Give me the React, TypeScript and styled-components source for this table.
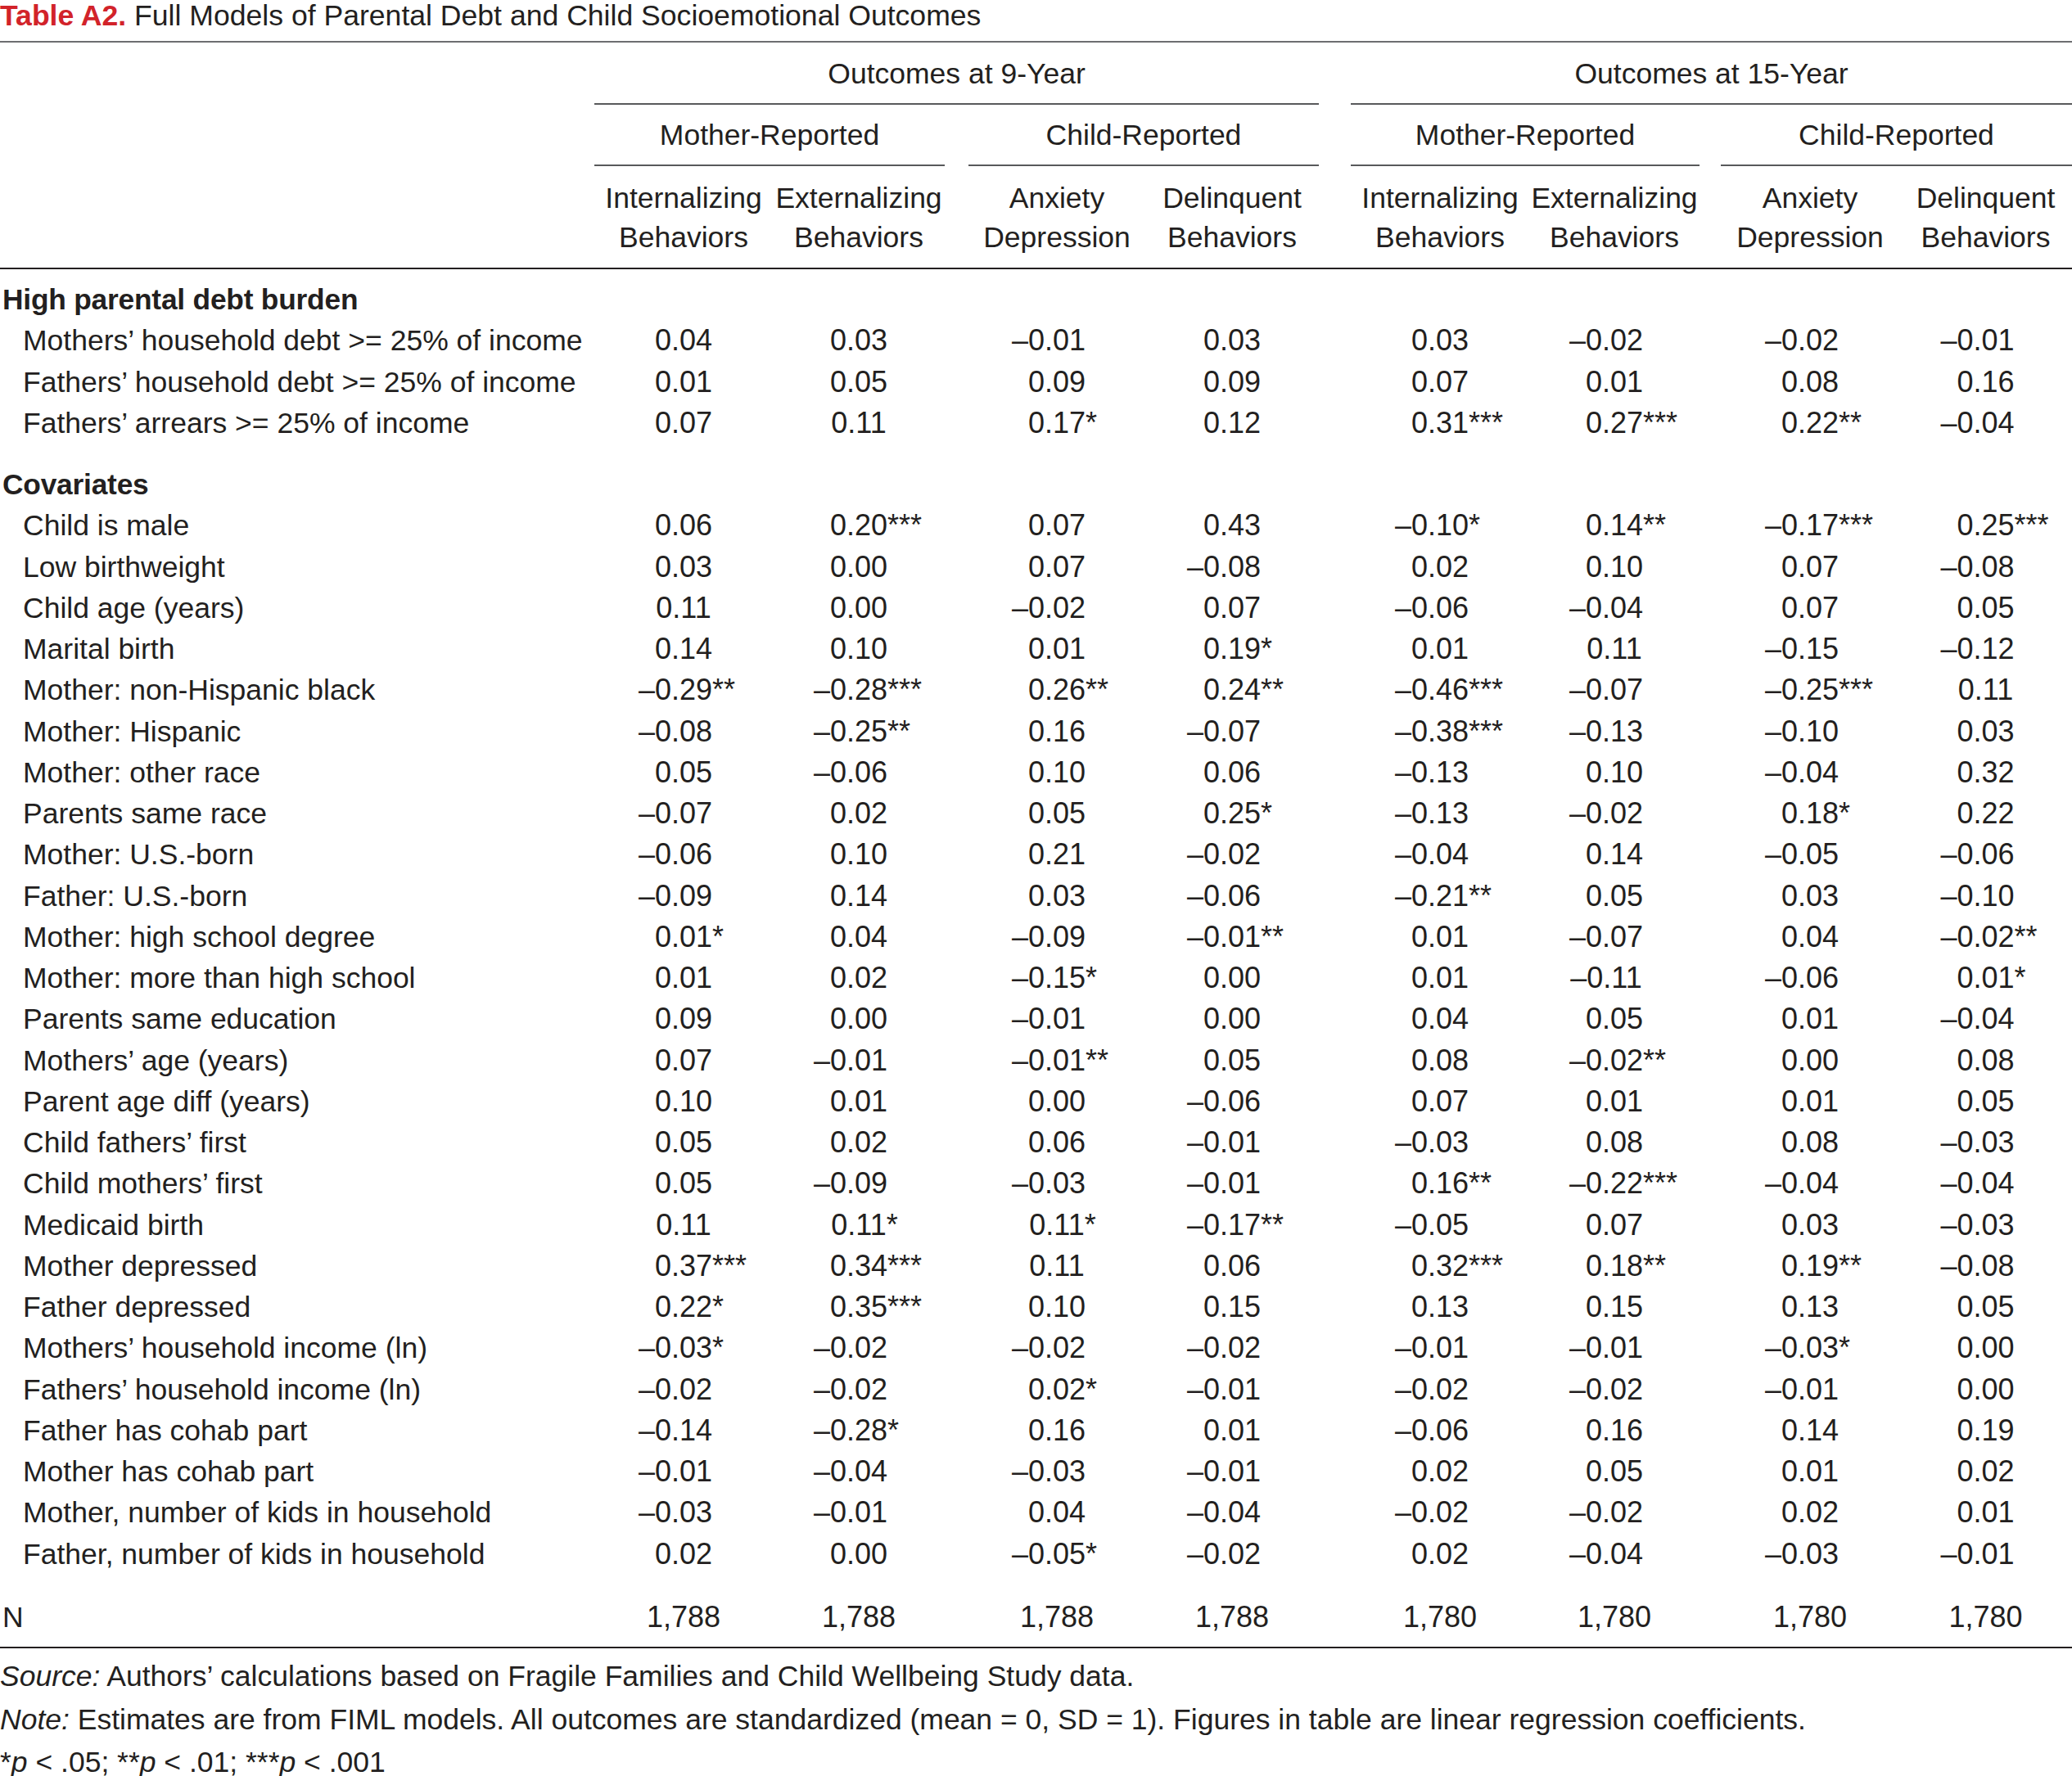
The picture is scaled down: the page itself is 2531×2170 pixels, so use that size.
import React from 'react';
import styled, { createGlobalStyle, css } from 'styled-components';

const GlobalStyle = createGlobalStyle`
    html, body {
        margin: 0;
        padding: 0;
        background: #ffffff;
    }
    body {
        font-family: "Liberation Sans", Arial, sans-serif;
        color: #231f20;
    }
`

// label column, then pairs of value columns with the gaps between groups
const columns = css`
    display: grid;
    grid-template-columns: 726px 218px 210px 29px 216px 212px 39px 218px 208px 26px 218px 211px;
`

const VALUE_COLS = [2, 3, 5, 6, 8, 9, 11, 12];

const Page = styled.div`
    width: 2531px;
    overflow: hidden;
`

const Title = styled.div`
    font-size: 35.6px;
    line-height: 38px;
    white-space: nowrap;
`

const TitleTag = styled.span`
    color: #d2232a;
    font-weight: 700;
`

const TopRule = styled.div`
    height: 2px;
    margin-top: 12px;
    background: #6d6e71;
`

const HeadRow = styled.div`
    ${columns}
    font-size: 35.5px;
`

const SpanHead = styled.div<{ $from: number; $to: number }>`
    grid-column: ${p => p.$from} / ${p => p.$to};
    text-align: center;
    line-height: 50px;
    white-space: nowrap;
    border-bottom: 2px solid #58595b;
`

const GroupHead = styled(SpanHead)`
    padding: 13px 0 11px;
`

const SubHead = styled(SpanHead)`
    padding: 12px 0 11px;
`

const ColHeadRow = styled(HeadRow)`
    border-bottom: 2px solid #231f20;
`

const ColHead = styled.div<{ $col: number }>`
    grid-column: ${p => p.$col};
    text-align: center;
    line-height: 48px;
    padding: 15px 0 13px;
    white-space: nowrap;
`

const Body = styled.div`
    padding: 12px 0 11px;
    border-bottom: 2px solid #231f20;
`

const Row = styled.div`
    ${columns}
    height: 50.25px;
    align-items: center;
    line-height: 50px;
`

const Section = styled.div`
    grid-column: 1;
    padding-left: 3px;
    font-size: 35.3px;
    font-weight: 700;
    letter-spacing: -0.2px;
    white-space: nowrap;
`

const Label = styled.div<{ $flush?: boolean }>`
    grid-column: 1;
    padding-left: ${p => (p.$flush ? 3 : 28)}px;
    font-size: 35.5px;
    white-space: nowrap;
`

const Spacer = styled.div<{ $h: number }>`
    height: ${p => p.$h}px;
`

const Value = styled.div<{ $col: number }>`
    grid-column: ${p => p.$col};
    display: grid;
    grid-template-columns: 1fr auto 1fr;
    font-size: 36px;
    white-space: nowrap;
`

const Minus = styled.span`
    justify-self: end;
`

const Stars = styled.span`
    justify-self: start;
`

const Count = styled.div<{ $col: number }>`
    grid-column: ${p => p.$col};
    text-align: center;
    font-size: 36px;
`

const Footer = styled.div`
    padding-top: 8px;
    font-size: 35.5px;
    line-height: 52.5px;
`

const Note = styled.div`
    white-space: nowrap;
`

const Em = styled.i`
    font-style: italic;
`

type Item = { label: string; values: string[] };

const debt: Item[] = [
    { label: 'Mothers’ household debt >= 25% of income', values: ['0.04', '0.03', '-0.01', '0.03', '0.03', '-0.02', '-0.02', '-0.01'] },
    { label: 'Fathers’ household debt >= 25% of income', values: ['0.01', '0.05', '0.09', '0.09', '0.07', '0.01', '0.08', '0.16'] },
    { label: 'Fathers’ arrears >= 25% of income', values: ['0.07', '0.11', '0.17*', '0.12', '0.31***', '0.27***', '0.22**', '-0.04'] },
];

const covariates: Item[] = [
    { label: 'Child is male', values: ['0.06', '0.20***', '0.07', '0.43', '-0.10*', '0.14**', '-0.17***', '0.25***'] },
    { label: 'Low birthweight', values: ['0.03', '0.00', '0.07', '-0.08', '0.02', '0.10', '0.07', '-0.08'] },
    { label: 'Child age (years)', values: ['0.11', '0.00', '-0.02', '0.07', '-0.06', '-0.04', '0.07', '0.05'] },
    { label: 'Marital birth', values: ['0.14', '0.10', '0.01', '0.19*', '0.01', '0.11', '-0.15', '-0.12'] },
    { label: 'Mother: non-Hispanic black', values: ['-0.29**', '-0.28***', '0.26**', '0.24**', '-0.46***', '-0.07', '-0.25***', '0.11'] },
    { label: 'Mother: Hispanic', values: ['-0.08', '-0.25**', '0.16', '-0.07', '-0.38***', '-0.13', '-0.10', '0.03'] },
    { label: 'Mother: other race', values: ['0.05', '-0.06', '0.10', '0.06', '-0.13', '0.10', '-0.04', '0.32'] },
    { label: 'Parents same race', values: ['-0.07', '0.02', '0.05', '0.25*', '-0.13', '-0.02', '0.18*', '0.22'] },
    { label: 'Mother: U.S.-born', values: ['-0.06', '0.10', '0.21', '-0.02', '-0.04', '0.14', '-0.05', '-0.06'] },
    { label: 'Father: U.S.-born', values: ['-0.09', '0.14', '0.03', '-0.06', '-0.21**', '0.05', '0.03', '-0.10'] },
    { label: 'Mother: high school degree', values: ['0.01*', '0.04', '-0.09', '-0.01**', '0.01', '-0.07', '0.04', '-0.02**'] },
    { label: 'Mother: more than high school', values: ['0.01', '0.02', '-0.15*', '0.00', '0.01', '-0.11', '-0.06', '0.01*'] },
    { label: 'Parents same education', values: ['0.09', '0.00', '-0.01', '0.00', '0.04', '0.05', '0.01', '-0.04'] },
    { label: 'Mothers’ age (years)', values: ['0.07', '-0.01', '-0.01**', '0.05', '0.08', '-0.02**', '0.00', '0.08'] },
    { label: 'Parent age diff (years)', values: ['0.10', '0.01', '0.00', '-0.06', '0.07', '0.01', '0.01', '0.05'] },
    { label: 'Child fathers’ first', values: ['0.05', '0.02', '0.06', '-0.01', '-0.03', '0.08', '0.08', '-0.03'] },
    { label: 'Child mothers’ first', values: ['0.05', '-0.09', '-0.03', '-0.01', '0.16**', '-0.22***', '-0.04', '-0.04'] },
    { label: 'Medicaid birth', values: ['0.11', '0.11*', '0.11*', '-0.17**', '-0.05', '0.07', '0.03', '-0.03'] },
    { label: 'Mother depressed', values: ['0.37***', '0.34***', '0.11', '0.06', '0.32***', '0.18**', '0.19**', '-0.08'] },
    { label: 'Father depressed', values: ['0.22*', '0.35***', '0.10', '0.15', '0.13', '0.15', '0.13', '0.05'] },
    { label: 'Mothers’ household income (ln)', values: ['-0.03*', '-0.02', '-0.02', '-0.02', '-0.01', '-0.01', '-0.03*', '0.00'] },
    { label: 'Fathers’ household income (ln)', values: ['-0.02', '-0.02', '0.02*', '-0.01', '-0.02', '-0.02', '-0.01', '0.00'] },
    { label: 'Father has cohab part', values: ['-0.14', '-0.28*', '0.16', '0.01', '-0.06', '0.16', '0.14', '0.19'] },
    { label: 'Mother has cohab part', values: ['-0.01', '-0.04', '-0.03', '-0.01', '0.02', '0.05', '0.01', '0.02'] },
    { label: 'Mother, number of kids in household', values: ['-0.03', '-0.01', '0.04', '-0.04', '-0.02', '-0.02', '0.02', '0.01'] },
    { label: 'Father, number of kids in household', values: ['0.02', '0.00', '-0.05*', '-0.02', '0.02', '-0.04', '-0.03', '-0.01'] },
];

const counts = ['1,788', '1,788', '1,788', '1,788', '1,780', '1,780', '1,780', '1,780'];

const outcomes = [
    ['Internalizing', 'Behaviors'],
    ['Externalizing', 'Behaviors'],
    ['Anxiety', 'Depression'],
    ['Delinquent', 'Behaviors'],
];

const Coef = ({ raw, col }: { raw: string; col: number }) => {
    const neg = raw.startsWith('-');
    const body = neg ? raw.slice(1) : raw;
    const digits = body.replace(/\*+$/, '');
    const stars = body.slice(digits.length);
    return (
        <Value $col={col}>
            <Minus>{neg ? '–' : ''}</Minus>
            <span>{digits}</span>
            <Stars>{stars}</Stars>
        </Value>
    );
};

const DataRow = ({ item }: { item: Item }) => (
    <Row>
        <Label>{item.label}</Label>
        {item.values.map((v, i) => <Coef key={i} raw={v} col={VALUE_COLS[i]} />)}
    </Row>
);

const App = () => {
    return (
        <Page>
            <GlobalStyle />
            <Title><TitleTag>Table A2.</TitleTag> Full Models of Parental Debt and Child Socioemotional Outcomes</Title>
            <TopRule />

            <HeadRow>
                <GroupHead $from={2} $to={7}>Outcomes at 9-Year</GroupHead>
                <GroupHead $from={8} $to={13}>Outcomes at 15-Year</GroupHead>
            </HeadRow>
            <HeadRow>
                <SubHead $from={2} $to={4}>Mother-Reported</SubHead>
                <SubHead $from={5} $to={7}>Child-Reported</SubHead>
                <SubHead $from={8} $to={10}>Mother-Reported</SubHead>
                <SubHead $from={11} $to={13}>Child-Reported</SubHead>
            </HeadRow>
            <ColHeadRow>
                {VALUE_COLS.map((c, i) => (
                    <ColHead key={c} $col={c}>
                        {outcomes[i % 4][0]}<br />{outcomes[i % 4][1]}
                    </ColHead>
                ))}
            </ColHeadRow>

            <Body>
                <Row><Section>High parental debt burden</Section></Row>
                {debt.map(item => <DataRow key={item.label} item={item} />)}
                <Spacer $h={25} />
                <Row><Section>Covariates</Section></Row>
                {covariates.map(item => <DataRow key={item.label} item={item} />)}
                <Spacer $h={27} />
                <Row>
                    <Label $flush>N</Label>
                    {counts.map((n, i) => <Count key={i} $col={VALUE_COLS[i]}>{n}</Count>)}
                </Row>
            </Body>

            <Footer>
                <Note><Em>Source:</Em> Authors’ calculations based on Fragile Families and Child Wellbeing Study data.</Note>
                <Note><Em>Note:</Em> Estimates are from FIML models. All outcomes are standardized (mean = 0, SD = 1). Figures in table are linear regression coefficients.</Note>
                <Note>*<Em>p</Em> &lt; .05; **<Em>p</Em> &lt; .01; ***<Em>p</Em> &lt; .001</Note>
            </Footer>
        </Page>
    );
};

export default App;
